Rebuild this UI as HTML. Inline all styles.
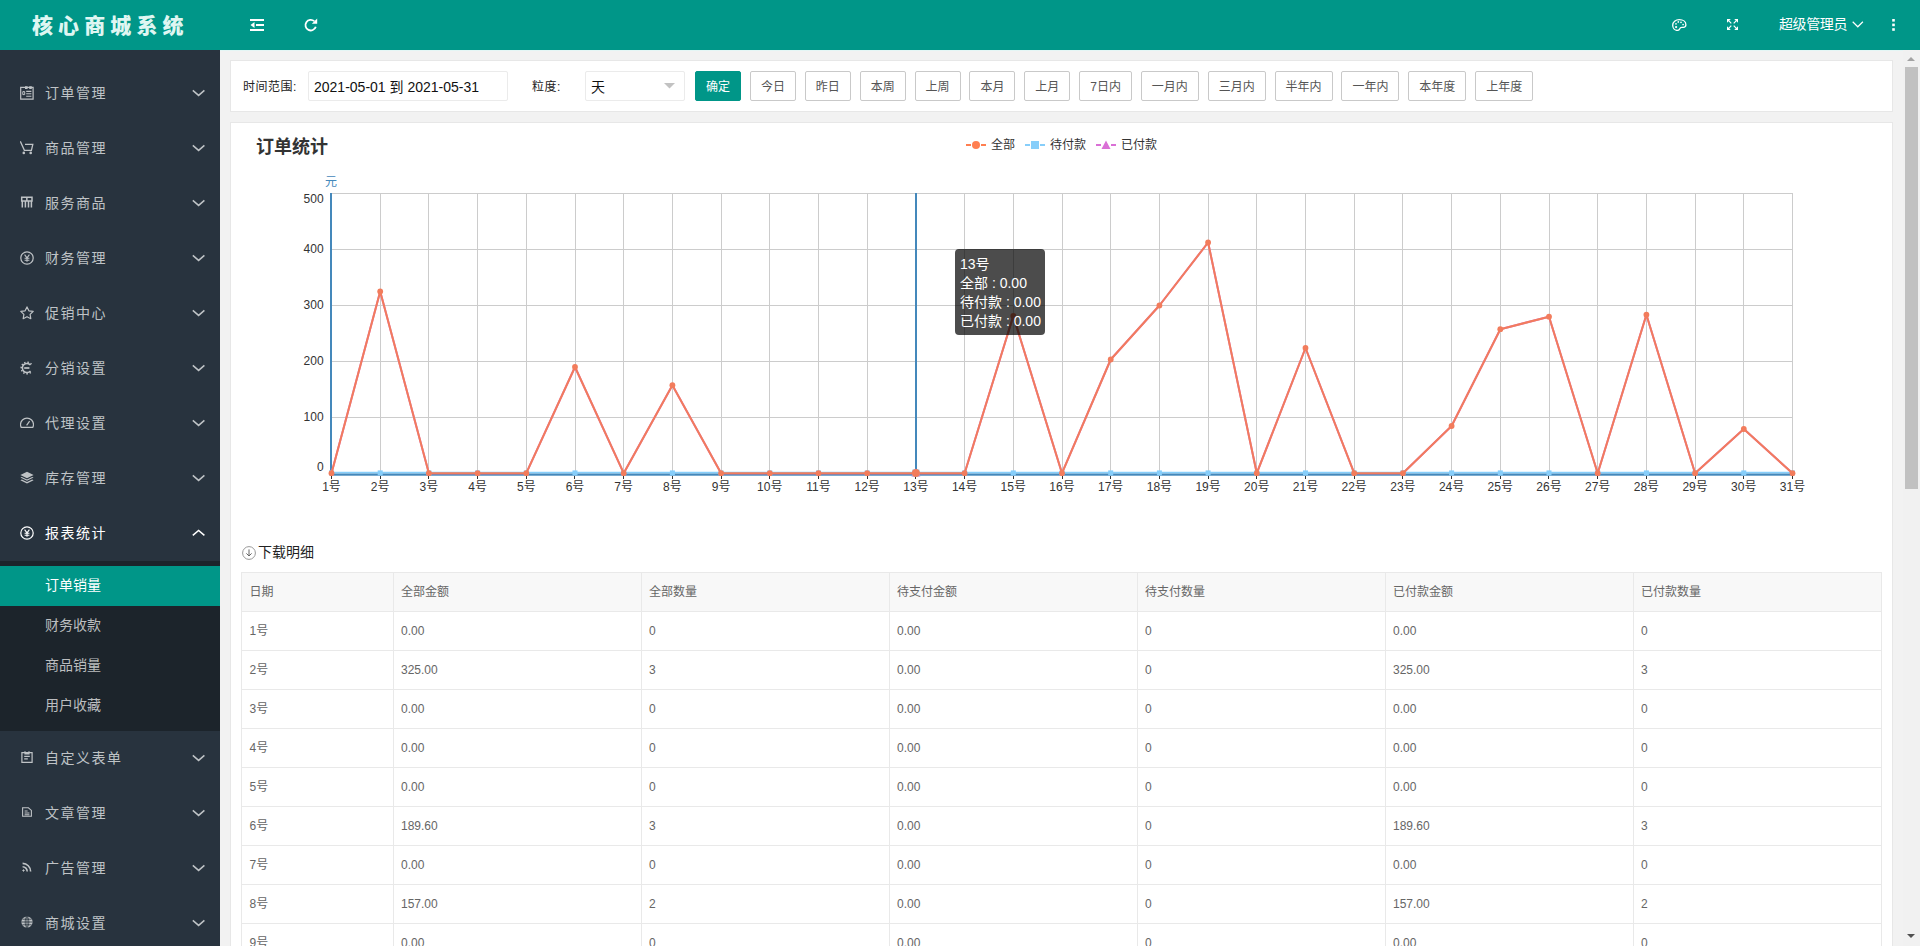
<!DOCTYPE html>
<html lang="zh-CN">
<head>
<meta charset="utf-8">
<title>核心商城系统</title>
<style>
*{box-sizing:border-box}
html,body{margin:0;padding:0}
body{width:1920px;height:946px;overflow:hidden;background:#f2f2f2;font-family:"Liberation Sans","Noto Sans CJK SC",sans-serif;font-size:14px;color:#333;position:relative}
.hd{position:absolute;left:0;top:0;width:1920px;height:50px;background:#009688;box-shadow:0 1px 0 #e4f6f5}
.logo{position:absolute;left:0;top:0;width:220px;height:50px;line-height:52px;text-align:left;padding-left:32px;color:#dff6f2;font-size:21px;font-weight:900;letter-spacing:5.1px;white-space:nowrap}
.hi{position:absolute;color:#fff}
.hi svg{display:block}
.user{position:absolute;left:1779px;top:0;height:50px;line-height:48px;color:#fff;font-size:14px;letter-spacing:-0.4px;white-space:nowrap}
.side{position:absolute;left:0;top:50px;width:220px;height:896px;background:#28333e;padding-top:15px;color:#bfc3c6}
.nav{position:relative;height:55px;line-height:55px;font-size:14px;letter-spacing:1.5px;white-space:nowrap}
.nav .ic{position:absolute;left:20px;top:20.5px;width:14px;height:14px;line-height:0}
.nav .ic.s12{left:21px;top:21px}
.nav .t{position:absolute;left:45px;top:1px}
.nav .chev{position:absolute;left:192px;top:24px}
.nav.on{color:#fff}
.sub{background:#1c242b;padding:5px 0;height:170px;margin-top:1px;margin-bottom:-1px}
.si{height:40px;line-height:39px;padding-left:45px;font-size:14px;color:#bbbdbf}
.si.act{background:#009688;color:#fff}
.main{position:absolute;left:220px;top:50px;width:1683px;height:896px;overflow:hidden}
.p1{position:absolute;left:10px;top:10px;width:1663px;height:52px;background:#fff;border:1px solid #e7e7e7}
.p2{position:absolute;left:10px;top:72px;width:1663px;height:900px;background:#fff;border:1px solid #e7e7e7}
.lab{position:absolute;top:0;height:50px;line-height:52px;letter-spacing:.5px;font-size:12px;color:#222;white-space:nowrap}
.inp{position:absolute;top:10px;height:30px;border:1px solid #ebebeb;border-radius:2px;background:#fff;line-height:30px;font-size:14px;color:#111;white-space:nowrap}
.btns{position:absolute;left:464px;top:10px;display:flex;white-space:nowrap}
.btn{display:block;height:30px;line-height:30px;padding:0 10px;border:1px solid #c9c9c9;border-radius:2px;font-size:12px;color:#555;background:#fff;margin-right:8.89px}
.btn.ok{background:#009688;border-color:#009688;color:#fff}
.chart{position:absolute;left:20px;top:10px;font-family:"Liberation Sans","Noto Sans CJK SC",sans-serif}
.tip{position:absolute;left:724px;top:126px;width:90px;height:86px;background:rgba(0,0,0,.7);border-radius:4px;color:#fff;font-size:14px;line-height:19px;padding:6px 5px 4px;white-space:nowrap}
.dl{position:absolute;left:10px;top:420px;height:20px;line-height:20px;font-size:14px;color:#222;white-space:nowrap}
.dl svg{position:absolute;left:1px;top:3px}
.dl span{position:absolute;left:17px;top:-1px}
.tb{position:absolute;left:10px;top:449px;width:1639.5px;border-collapse:collapse;table-layout:fixed;font-size:12px;color:#666}
.tb th,.tb td{height:39px;padding:0 7.5px;border:1px solid #e9e9e9;text-align:left;font-weight:normal;line-height:20px}
.tb th{background:#f8f8f8}
.sbar{position:absolute;left:1903px;top:50px;width:17px;height:896px;background:#f1f1f1}
.sbar .th{position:absolute;left:2px;top:17px;width:13px;height:422px;background:#c1c1c1}
.sbar .a1{position:absolute;left:4px;top:7px;width:0;height:0;border:4.5px solid transparent;border-top:0;border-bottom:4.5px solid #a3a3a3}
.sbar .a2{position:absolute;left:4px;top:884px;width:0;height:0;border:4.5px solid transparent;border-bottom:0;border-top:4.5px solid #505050}
</style>
</head>
<body>
<div class="hd">
  <div class="logo">核心商城系统</div>
  <div class="hi" style="left:250px;top:19px"><svg width="14" height="12" viewBox="0 0 14 12" fill="#fff"><rect x="0" y="0" width="14" height="2"/><rect x="6" y="5" width="8" height="2"/><rect x="0" y="10" width="14" height="2"/><path d="M0.500 6l4-3v6z"/></svg></div>
  <div class="hi" style="left:304px;top:18px"><svg width="14" height="14" viewBox="0 0 14 14" fill="none" stroke="#fff" stroke-width="1.800"><path d="M11.800 8.800A5.300 5.300 0 1 1 10.300 3.200"/><path d="M13.200 0.400v5.400H7.800z" fill="#fff" stroke="none"/></svg></div>
  <div class="hi" style="left:1672px;top:19px"><svg width="15" height="12" viewBox="0 0 15 12" fill="none" stroke="#fff" stroke-width="1.300"><path d="M0.700 6.300C0.700 3 3.600 0.700 7.300 0.700C11 0.700 13.900 2.800 13.900 5.800C13.900 7.600 12.800 8.300 11.300 8.300L9.800 8.300C8.400 8.300 7.900 9.200 7.600 10C7.200 11 6.300 11.400 5.200 11.400C2.600 11.400 0.700 9.200 0.700 6.300Z"/><g fill="#fff" stroke="none"><circle cx="4" cy="4.800" r="0.850"/><circle cx="6.300" cy="2.900" r="0.850"/><circle cx="9" cy="3.300" r="0.850"/><circle cx="11.100" cy="5.500" r="0.850"/><circle cx="4.100" cy="8.100" r="1.150"/></g></svg></div>
  <div class="hi" style="left:1727px;top:19px"><svg width="11" height="11" viewBox="0 0 11 11" fill="#fff" stroke="#fff" stroke-width="1.200"><path d="M0 0h3.800L0 3.800zM11 0v3.800L7.200 0zM11 11H7.200L11 7.200zM0 11V7.200L3.800 11z" stroke="none"/><path d="M1.200 1.200l3.100 3.100M9.800 1.200L6.700 4.300M9.800 9.800L6.700 6.700M1.200 9.800l3.100-3.100" fill="none"/></svg></div>
  <div class="user">超级管理员</div>
  <div class="hi" style="left:1852px;top:21px"><svg width="12" height="7" viewBox="0 0 12 7" fill="none" stroke="#fff" stroke-width="1.200"><path d="M0.700 0.800L5.800 5.800l5.100-5"/></svg></div>
  <div class="hi" style="left:1892px;top:19px"><svg width="3" height="12" viewBox="0 0 3 12" fill="#fff"><rect x="0.200" y="0" width="2.600" height="2.600"/><rect x="0.200" y="4.600" width="2.600" height="2.600"/><rect x="0.200" y="9.200" width="2.600" height="2.600"/></svg></div>
</div>
<div class="side">
<div class="nav"><span class="ic"><svg width="14" height="14" viewBox="0 0 14 14" fill="none" stroke="currentColor" stroke-width="1.200"><path d="M0.700 1.400H13.100V13.200H0.700Z"/><path d="M5 0.300h2.600v2.600H5zM9.200 0.300h2.600v2.600H9.200z" fill="currentColor" stroke="none"/><path d="M2.800 5.600h1.900v3H2.800z" stroke-width="1"/><path d="M6.200 5.400H11.400M6.200 7.700H11.400M6.200 10.200H11.400" stroke-width="1.100"/></svg></span><span class="t">订单管理</span><svg class="chev" width="14" height="8" viewBox="0 0 14 8" fill="none" stroke="currentColor" stroke-width="1.5"><path d="M0.800 1.400L6.600 6.400L12.400 1.400"/></svg></div>
<div class="nav"><span class="ic"><svg width="14" height="14" viewBox="0 0 14 14" fill="none" stroke="currentColor" stroke-width="1.300"><path d="M0.300 0.300L4.400 9.300H11.400L12.800 3.300H5"/><circle cx="3.800" cy="11.900" r="1.300" fill="currentColor" stroke="none"/><circle cx="10.700" cy="11.900" r="1.300" fill="currentColor" stroke="none"/></svg></span><span class="t">商品管理</span><svg class="chev" width="14" height="8" viewBox="0 0 14 8" fill="none" stroke="currentColor" stroke-width="1.5"><path d="M0.800 1.400L6.600 6.400L12.400 1.400"/></svg></div>
<div class="nav"><span class="ic"><svg width="14" height="14" viewBox="0 0 14 14" fill="none" stroke="currentColor" stroke-width="1.500"><path d="M1.700 1.300H12V4.900H1.700ZM6.850 1.300V4.900M2.300 4.900V11.600M5.400 4.900V11.600M8.500 4.900V11.600M11.400 4.900V11.600"/></svg></span><span class="t">服务商品</span><svg class="chev" width="14" height="8" viewBox="0 0 14 8" fill="none" stroke="currentColor" stroke-width="1.5"><path d="M0.800 1.400L6.600 6.400L12.400 1.400"/></svg></div>
<div class="nav"><span class="ic"><svg width="14" height="14" viewBox="0 0 14 14" fill="none" stroke="currentColor" stroke-width="1.2"><circle cx="7" cy="7" r="6.2"/><path d="M4.6 3.6L7 6.8l2.4-3.2M7 6.8v4M4.6 7.2h4.8M4.6 9.2h4.8" stroke-width="1.1"/></svg></span><span class="t">财务管理</span><svg class="chev" width="14" height="8" viewBox="0 0 14 8" fill="none" stroke="currentColor" stroke-width="1.5"><path d="M0.800 1.400L6.600 6.400L12.400 1.400"/></svg></div>
<div class="nav"><span class="ic"><svg width="14" height="14" viewBox="0 0 14 14" fill="none" stroke="currentColor" stroke-width="1.2" stroke-linejoin="round"><path d="M7 0.9l1.9 3.9 4.3.6-3.1 3 .7 4.3L7 10.7l-3.8 2 .7-4.3-3.1-3 4.3-.6z"/></svg></span><span class="t">促销中心</span><svg class="chev" width="14" height="8" viewBox="0 0 14 8" fill="none" stroke="currentColor" stroke-width="1.5"><path d="M0.800 1.400L6.600 6.400L12.400 1.400"/></svg></div>
<div class="nav"><span class="ic"><svg width="14" height="14" viewBox="0 0 14 14" fill="none" stroke="currentColor"><path d="M10.520 4.040A4.600 4.600 0 1 0 10.520 9.960" stroke-width="1.500"/><path d="M11.440 3.270A5.800 5.800 0 1 0 11.440 10.730" stroke-width="1.500" stroke-dasharray="1.400 1.750"/><path d="M4.200 7H9.400" stroke-width="1.700"/></svg></span><span class="t">分销设置</span><svg class="chev" width="14" height="8" viewBox="0 0 14 8" fill="none" stroke="currentColor" stroke-width="1.5"><path d="M0.800 1.400L6.600 6.400L12.400 1.400"/></svg></div>
<div class="nav"><span class="ic"><svg width="14" height="14" viewBox="0 0 14 14" fill="none" stroke="currentColor" stroke-width="1.2"><path d="M1.2 11.4h11.6c.5-.9.7-1.8.7-2.8A6.5 6.5 0 0 0 .5 8.600c0 1 .2 1.900.7 2.800zM6.600 9.400l3-4.200"/></svg></span><span class="t">代理设置</span><svg class="chev" width="14" height="8" viewBox="0 0 14 8" fill="none" stroke="currentColor" stroke-width="1.5"><path d="M0.800 1.400L6.600 6.400L12.400 1.400"/></svg></div>
<div class="nav"><span class="ic"><svg width="14" height="14" viewBox="0 0 14 14" fill="currentColor"><path d="M7 0.800L0.400 4 7 7.200 13.600 4z"/><path d="M1.900 5.900L.4 6.600 7 9.800l6.600-3.200-1.500-.7L7 8.400z"/><path d="M1.900 8.500L.4 9.200 7 12.400l6.600-3.200-1.500-.7L7 11z"/></svg></span><span class="t">库存管理</span><svg class="chev" width="14" height="8" viewBox="0 0 14 8" fill="none" stroke="currentColor" stroke-width="1.5"><path d="M0.800 1.400L6.600 6.400L12.400 1.400"/></svg></div>
<div class="nav on"><span class="ic"><svg width="14" height="14" viewBox="0 0 14 14" fill="none" stroke="currentColor" stroke-width="1.2"><circle cx="7" cy="7" r="6.2"/><path d="M4.6 3.6L7 6.8l2.4-3.2M7 6.8v4M4.6 7.2h4.8M4.6 9.2h4.8" stroke-width="1.1"/></svg></span><span class="t">报表统计</span><svg class="chev" width="14" height="8" viewBox="0 0 14 8" fill="none" stroke="currentColor" stroke-width="1.5"><path d="M0.800 6.400L6.600 1.400L12.400 6.400"/></svg></div>
<div class="sub"><div class="si act">订单销量</div><div class="si">财务收款</div><div class="si">商品销量</div><div class="si">用户收藏</div></div>
<div class="nav"><span class="ic s12"><svg width="12" height="12" viewBox="0 0 12 12" fill="none" stroke="currentColor" stroke-width="1.2"><path d="M0.900 1.600h10.200v9.800H0.900zM4 0.200v2.600h4V0.200M3.200 5.400h5.600M3.200 7.800h3.600"/></svg></span><span class="t">自定义表单</span><svg class="chev" width="14" height="8" viewBox="0 0 14 8" fill="none" stroke="currentColor" stroke-width="1.5"><path d="M0.800 1.400L6.600 6.400L12.400 1.400"/></svg></div>
<div class="nav"><span class="ic s12"><svg width="12" height="12" viewBox="0 0 12 12" fill="none" stroke="currentColor" stroke-width="1.2"><path d="M1.600 1.800h5.800l3 2.600v5.800H1.600zM3.600 5h3M3.600 7h4.800M3.600 8.800h4.800" stroke-width="1.1"/></svg></span><span class="t">文章管理</span><svg class="chev" width="14" height="8" viewBox="0 0 14 8" fill="none" stroke="currentColor" stroke-width="1.5"><path d="M0.800 1.400L6.600 6.400L12.400 1.400"/></svg></div>
<div class="nav"><span class="ic s12"><svg width="12" height="12" viewBox="0 0 12 12" fill="none" stroke="currentColor" stroke-width="1.6"><path d="M1.600 2.400a8 8 0 0 1 8 8M1.600 5.800a4.600 4.600 0 0 1 4.600 4.600"/><circle cx="2.500" cy="9.500" r="0.700" fill="currentColor" stroke-width="1"/></svg></span><span class="t">广告管理</span><svg class="chev" width="14" height="8" viewBox="0 0 14 8" fill="none" stroke="currentColor" stroke-width="1.5"><path d="M0.800 1.400L6.600 6.400L12.400 1.400"/></svg></div>
<div class="nav"><span class="ic s12"><svg width="12" height="12" viewBox="0 0 12 12"><circle cx="6" cy="6" r="5.600" fill="currentColor"/><path d="M6 0.400v11.200M0.400 6h11.200M1.400 3.200h9.200M1.400 8.800h9.200M6 0.400C3.600 2.400 3.600 9.600 6 11.600M6 0.400c2.400 2 2.400 9.200 0 11.200" stroke="#28333e" stroke-width="0.800" fill="none"/></svg></span><span class="t">商城设置</span><svg class="chev" width="14" height="8" viewBox="0 0 14 8" fill="none" stroke="currentColor" stroke-width="1.5"><path d="M0.800 1.400L6.600 6.400L12.400 1.400"/></svg></div>
</div>
<div class="main">
  <div class="p1">
    <div class="lab" style="left:12px">时间范围:</div>
    <div class="inp" style="left:77px;width:200px;padding-left:5px">2021-05-01 到 2021-05-31</div>
    <div class="lab" style="left:301px">粒度:</div>
    <div class="inp" style="left:354px;width:100px;padding-left:5px">天<svg style="position:absolute;left:78px;top:11px" width="11" height="6" viewBox="0 0 11 6"><path d="M0 0h11L5.500 5.600z" fill="#c2c2c2"/></svg></div>
    <div class="btns"><span class="btn ok">确定</span><span class="btn">今日</span><span class="btn">昨日</span><span class="btn">本周</span><span class="btn">上周</span><span class="btn">本月</span><span class="btn">上月</span><span class="btn">7日内</span><span class="btn">一月内</span><span class="btn">三月内</span><span class="btn">半年内</span><span class="btn">一年内</span><span class="btn">本年度</span><span class="btn">上年度</span></div>
  </div>
  <div class="p2">
    <svg class="chart" width="1621" height="400" viewBox="251 133 1621 400">
<path d="M331.50 193.5V473.5M380.20 193.5V473.5M428.90 193.5V473.5M477.60 193.5V473.5M526.30 193.5V473.5M575.00 193.5V473.5M623.70 193.5V473.5M672.40 193.5V473.5M721.10 193.5V473.5M769.80 193.5V473.5M818.50 193.5V473.5M867.20 193.5V473.5M915.90 193.5V473.5M964.60 193.5V473.5M1013.30 193.5V473.5M1062.00 193.5V473.5M1110.70 193.5V473.5M1159.40 193.5V473.5M1208.10 193.5V473.5M1256.80 193.5V473.5M1305.50 193.5V473.5M1354.20 193.5V473.5M1402.90 193.5V473.5M1451.60 193.5V473.5M1500.30 193.5V473.5M1549.00 193.5V473.5M1597.70 193.5V473.5M1646.40 193.5V473.5M1695.10 193.5V473.5M1743.80 193.5V473.5M1792.50 193.5V473.5M331.5 193.5H1792.5M331.5 249.5H1792.5M331.5 305.5H1792.5M331.5 361.5H1792.5M331.5 417.5H1792.5M331.5 473.5H1792.5" stroke="#ccc" stroke-width="1" fill="none" shape-rendering="crispEdges"/>
<rect x="330" y="193" width="2" height="282" fill="#4488bb"/>
<rect x="330" y="473.5" width="1463" height="2.2" fill="#4488bb"/>
<path d="M331.50 475.5v3M380.50 475.5v3M428.50 475.5v3M477.50 475.5v3M526.50 475.5v3M574.50 475.5v3M623.50 475.5v3M672.50 475.5v3M721.50 475.5v3M769.50 475.5v3M818.50 475.5v3M867.50 475.5v3M915.50 475.5v3M964.50 475.5v3M1013.50 475.5v3M1062.50 475.5v3M1110.50 475.5v3M1159.50 475.5v3M1208.50 475.5v3M1256.50 475.5v3M1305.50 475.5v3M1354.50 475.5v3M1402.50 475.5v3M1451.50 475.5v3M1500.50 475.5v3M1548.50 475.5v3M1597.50 475.5v3M1646.50 475.5v3M1695.50 475.5v3M1743.50 475.5v3M1792.50 475.5v3" stroke="#333" stroke-width="1" fill="none" shape-rendering="crispEdges"/>
<rect x="915" y="193" width="2" height="281" fill="#4488bb"/>
<path d="M331.5 473.2 L380.2 291.5 L428.9 473.2 L477.6 473.2 L526.3 473.2 L575.0 367.0 L623.7 473.2 L672.4 385.2 L721.1 473.2 L769.8 473.2 L818.5 473.2 L867.2 473.2 L915.9 473.2 L964.6 473.2 L1013.3 316.0 L1062.0 473.2 L1110.7 359.5 L1159.4 305.5 L1208.1 242.5 L1256.8 473.2 L1305.5 348.0 L1354.2 473.2 L1402.9 473.2 L1451.6 426.0 L1500.3 329.2 L1549.0 316.7 L1597.7 473.2 L1646.4 314.7 L1695.1 473.2 L1743.8 429.0 L1792.5 473.2" stroke="#da70d6" stroke-width="2" fill="none" stroke-linejoin="round"/>
<path d="M331.5 472.7H1792.5" stroke="#87cefa" stroke-width="1.8" fill="none"/>
<rect x="329.0" y="470.4" width="5" height="5" fill="#87cefa"/>
<rect x="377.7" y="470.4" width="5" height="5" fill="#87cefa"/>
<rect x="426.4" y="470.4" width="5" height="5" fill="#87cefa"/>
<rect x="475.1" y="470.4" width="5" height="5" fill="#87cefa"/>
<rect x="523.8" y="470.4" width="5" height="5" fill="#87cefa"/>
<rect x="572.5" y="470.4" width="5" height="5" fill="#87cefa"/>
<rect x="621.2" y="470.4" width="5" height="5" fill="#87cefa"/>
<rect x="669.9" y="470.4" width="5" height="5" fill="#87cefa"/>
<rect x="718.6" y="470.4" width="5" height="5" fill="#87cefa"/>
<rect x="767.3" y="470.4" width="5" height="5" fill="#87cefa"/>
<rect x="816.0" y="470.4" width="5" height="5" fill="#87cefa"/>
<rect x="864.7" y="470.4" width="5" height="5" fill="#87cefa"/>
<rect x="913.4" y="470.4" width="5" height="5" fill="#87cefa"/>
<rect x="962.1" y="470.4" width="5" height="5" fill="#87cefa"/>
<rect x="1010.8" y="470.4" width="5" height="5" fill="#87cefa"/>
<rect x="1059.5" y="470.4" width="5" height="5" fill="#87cefa"/>
<rect x="1108.2" y="470.4" width="5" height="5" fill="#87cefa"/>
<rect x="1156.9" y="470.4" width="5" height="5" fill="#87cefa"/>
<rect x="1205.6" y="470.4" width="5" height="5" fill="#87cefa"/>
<rect x="1254.3" y="470.4" width="5" height="5" fill="#87cefa"/>
<rect x="1303.0" y="470.4" width="5" height="5" fill="#87cefa"/>
<rect x="1351.7" y="470.4" width="5" height="5" fill="#87cefa"/>
<rect x="1400.4" y="470.4" width="5" height="5" fill="#87cefa"/>
<rect x="1449.1" y="470.4" width="5" height="5" fill="#87cefa"/>
<rect x="1497.8" y="470.4" width="5" height="5" fill="#87cefa"/>
<rect x="1546.5" y="470.4" width="5" height="5" fill="#87cefa"/>
<rect x="1595.2" y="470.4" width="5" height="5" fill="#87cefa"/>
<rect x="1643.9" y="470.4" width="5" height="5" fill="#87cefa"/>
<rect x="1692.6" y="470.4" width="5" height="5" fill="#87cefa"/>
<rect x="1741.3" y="470.4" width="5" height="5" fill="#87cefa"/>
<rect x="1790.0" y="470.4" width="5" height="5" fill="#87cefa"/>
<path d="M331.5 473.2 L380.2 291.5 L428.9 473.2 L477.6 473.2 L526.3 473.2 L575.0 367.0 L623.7 473.2 L672.4 385.2 L721.1 473.2 L769.8 473.2 L818.5 473.2 L867.2 473.2 L915.9 473.2 L964.6 473.2 L1013.3 316.0 L1062.0 473.2 L1110.7 359.5 L1159.4 305.5 L1208.1 242.5 L1256.8 473.2 L1305.5 348.0 L1354.2 473.2 L1402.9 473.2 L1451.6 426.0 L1500.3 329.2 L1549.0 316.7 L1597.7 473.2 L1646.4 314.7 L1695.1 473.2 L1743.8 429.0 L1792.5 473.2" stroke="#f27c5c" stroke-width="2" fill="none" stroke-linejoin="round"/>
<circle cx="331.5" cy="473.2" r="2.9" fill="#f27c5c"/>
<circle cx="380.2" cy="291.5" r="2.9" fill="#f27c5c"/>
<circle cx="428.9" cy="473.2" r="2.9" fill="#f27c5c"/>
<circle cx="477.6" cy="473.2" r="2.9" fill="#f27c5c"/>
<circle cx="526.3" cy="473.2" r="2.9" fill="#f27c5c"/>
<circle cx="575.0" cy="367.0" r="2.9" fill="#f27c5c"/>
<circle cx="623.7" cy="473.2" r="2.9" fill="#f27c5c"/>
<circle cx="672.4" cy="385.2" r="2.9" fill="#f27c5c"/>
<circle cx="721.1" cy="473.2" r="2.9" fill="#f27c5c"/>
<circle cx="769.8" cy="473.2" r="2.9" fill="#f27c5c"/>
<circle cx="818.5" cy="473.2" r="2.9" fill="#f27c5c"/>
<circle cx="867.2" cy="473.2" r="2.9" fill="#f27c5c"/>
<circle cx="915.9" cy="473.2" r="2.9" fill="#f27c5c"/>
<circle cx="964.6" cy="473.2" r="2.9" fill="#f27c5c"/>
<circle cx="1013.3" cy="316.0" r="2.9" fill="#f27c5c"/>
<circle cx="1062.0" cy="473.2" r="2.9" fill="#f27c5c"/>
<circle cx="1110.7" cy="359.5" r="2.9" fill="#f27c5c"/>
<circle cx="1159.4" cy="305.5" r="2.9" fill="#f27c5c"/>
<circle cx="1208.1" cy="242.5" r="2.9" fill="#f27c5c"/>
<circle cx="1256.8" cy="473.2" r="2.9" fill="#f27c5c"/>
<circle cx="1305.5" cy="348.0" r="2.9" fill="#f27c5c"/>
<circle cx="1354.2" cy="473.2" r="2.9" fill="#f27c5c"/>
<circle cx="1402.9" cy="473.2" r="2.9" fill="#f27c5c"/>
<circle cx="1451.6" cy="426.0" r="2.9" fill="#f27c5c"/>
<circle cx="1500.3" cy="329.2" r="2.9" fill="#f27c5c"/>
<circle cx="1549.0" cy="316.7" r="2.9" fill="#f27c5c"/>
<circle cx="1597.7" cy="473.2" r="2.9" fill="#f27c5c"/>
<circle cx="1646.4" cy="314.7" r="2.9" fill="#f27c5c"/>
<circle cx="1695.1" cy="473.2" r="2.9" fill="#f27c5c"/>
<circle cx="1743.8" cy="429.0" r="2.9" fill="#f27c5c"/>
<circle cx="1792.5" cy="473.2" r="2.9" fill="#f27c5c"/>
<path d="M915.9 468.5l4.5 8h-9z" fill="#da70d6"/>
<rect x="912.4" y="469.5" width="7" height="7" fill="#87cefa"/>
<circle cx="915.9" cy="473" r="4" fill="#f27c5c"/>
<text x="256" y="153" font-size="18" font-weight="bold" fill="#333">订单统计</text>
<path d="M966 145h5M981 145h5" stroke="#ff7f50" stroke-width="2"/><circle cx="976" cy="145" r="4" fill="#ff7f50"/>
<text x="991" y="149.3" font-size="12" fill="#333">全部</text>
<path d="M1025 145h5M1040 145h5" stroke="#87cefa" stroke-width="2"/><rect x="1031" y="141" width="8" height="8" fill="#87cefa"/>
<text x="1050" y="149.3" font-size="12" fill="#333">待付款</text>
<path d="M1096 145h5M1111 145h5" stroke="#da70d6" stroke-width="2"/><path d="M1106 140.5l4.5 8.5h-9z" fill="#da70d6"/>
<text x="1121" y="149.3" font-size="12" fill="#333">已付款</text>
<text x="331" y="185.5" font-size="12" fill="#4488bb" text-anchor="middle">元</text>
<text x="323.6" y="203.3" font-size="12" fill="#333" text-anchor="end">500</text>
<text x="323.6" y="253.3" font-size="12" fill="#333" text-anchor="end">400</text>
<text x="323.6" y="309.3" font-size="12" fill="#333" text-anchor="end">300</text>
<text x="323.6" y="365.3" font-size="12" fill="#333" text-anchor="end">200</text>
<text x="323.6" y="421.3" font-size="12" fill="#333" text-anchor="end">100</text>
<text x="323.6" y="471.3" font-size="12" fill="#333" text-anchor="end">0</text>
<text x="331.5" y="491" font-size="12" fill="#333" text-anchor="middle">1号</text>
<text x="380.2" y="491" font-size="12" fill="#333" text-anchor="middle">2号</text>
<text x="428.9" y="491" font-size="12" fill="#333" text-anchor="middle">3号</text>
<text x="477.6" y="491" font-size="12" fill="#333" text-anchor="middle">4号</text>
<text x="526.3" y="491" font-size="12" fill="#333" text-anchor="middle">5号</text>
<text x="575.0" y="491" font-size="12" fill="#333" text-anchor="middle">6号</text>
<text x="623.7" y="491" font-size="12" fill="#333" text-anchor="middle">7号</text>
<text x="672.4" y="491" font-size="12" fill="#333" text-anchor="middle">8号</text>
<text x="721.1" y="491" font-size="12" fill="#333" text-anchor="middle">9号</text>
<text x="769.8" y="491" font-size="12" fill="#333" text-anchor="middle">10号</text>
<text x="818.5" y="491" font-size="12" fill="#333" text-anchor="middle">11号</text>
<text x="867.2" y="491" font-size="12" fill="#333" text-anchor="middle">12号</text>
<text x="915.9" y="491" font-size="12" fill="#333" text-anchor="middle">13号</text>
<text x="964.6" y="491" font-size="12" fill="#333" text-anchor="middle">14号</text>
<text x="1013.3" y="491" font-size="12" fill="#333" text-anchor="middle">15号</text>
<text x="1062.0" y="491" font-size="12" fill="#333" text-anchor="middle">16号</text>
<text x="1110.7" y="491" font-size="12" fill="#333" text-anchor="middle">17号</text>
<text x="1159.4" y="491" font-size="12" fill="#333" text-anchor="middle">18号</text>
<text x="1208.1" y="491" font-size="12" fill="#333" text-anchor="middle">19号</text>
<text x="1256.8" y="491" font-size="12" fill="#333" text-anchor="middle">20号</text>
<text x="1305.5" y="491" font-size="12" fill="#333" text-anchor="middle">21号</text>
<text x="1354.2" y="491" font-size="12" fill="#333" text-anchor="middle">22号</text>
<text x="1402.9" y="491" font-size="12" fill="#333" text-anchor="middle">23号</text>
<text x="1451.6" y="491" font-size="12" fill="#333" text-anchor="middle">24号</text>
<text x="1500.3" y="491" font-size="12" fill="#333" text-anchor="middle">25号</text>
<text x="1549.0" y="491" font-size="12" fill="#333" text-anchor="middle">26号</text>
<text x="1597.7" y="491" font-size="12" fill="#333" text-anchor="middle">27号</text>
<text x="1646.4" y="491" font-size="12" fill="#333" text-anchor="middle">28号</text>
<text x="1695.1" y="491" font-size="12" fill="#333" text-anchor="middle">29号</text>
<text x="1743.8" y="491" font-size="12" fill="#333" text-anchor="middle">30号</text>
<text x="1792.5" y="491" font-size="12" fill="#333" text-anchor="middle">31号</text>
</svg>
    <div class="tip">13号<br>全部 : 0.00<br>待付款 : 0.00<br>已付款 : 0.00</div>
    <div class="dl"><svg width="14" height="14" viewBox="0 0 14 14" fill="none" stroke="#999" stroke-width="1"><circle cx="7" cy="7" r="6.400"/><path d="M7 3.400v6.400M4.400 7.400L7 10l2.600-2.600" stroke="#666"/></svg><span>下载明细</span></div>
    <table class="tb"><colgroup><col style="width:151.5px"><col style="width:248px"><col style="width:248px"><col style="width:248px"><col style="width:248px"><col style="width:248px"><col style="width:248px"></colgroup>
<thead><tr><th>日期</th><th>全部金额</th><th>全部数量</th><th>待支付金额</th><th>待支付数量</th><th>已付款金额</th><th>已付款数量</th></tr></thead><tbody>
<tr><td>1号</td><td>0.00</td><td>0</td><td>0.00</td><td>0</td><td>0.00</td><td>0</td></tr>
<tr><td>2号</td><td>325.00</td><td>3</td><td>0.00</td><td>0</td><td>325.00</td><td>3</td></tr>
<tr><td>3号</td><td>0.00</td><td>0</td><td>0.00</td><td>0</td><td>0.00</td><td>0</td></tr>
<tr><td>4号</td><td>0.00</td><td>0</td><td>0.00</td><td>0</td><td>0.00</td><td>0</td></tr>
<tr><td>5号</td><td>0.00</td><td>0</td><td>0.00</td><td>0</td><td>0.00</td><td>0</td></tr>
<tr><td>6号</td><td>189.60</td><td>3</td><td>0.00</td><td>0</td><td>189.60</td><td>3</td></tr>
<tr><td>7号</td><td>0.00</td><td>0</td><td>0.00</td><td>0</td><td>0.00</td><td>0</td></tr>
<tr><td>8号</td><td>157.00</td><td>2</td><td>0.00</td><td>0</td><td>157.00</td><td>2</td></tr>
<tr><td>9号</td><td>0.00</td><td>0</td><td>0.00</td><td>0</td><td>0.00</td><td>0</td></tr>
<tr><td>10号</td><td>0.00</td><td>0</td><td>0.00</td><td>0</td><td>0.00</td><td>0</td></tr>
</tbody></table>
  </div>
</div>
<div class="sbar"><div class="a1"></div><div class="th"></div><div class="a2"></div></div>
</body>
</html>
